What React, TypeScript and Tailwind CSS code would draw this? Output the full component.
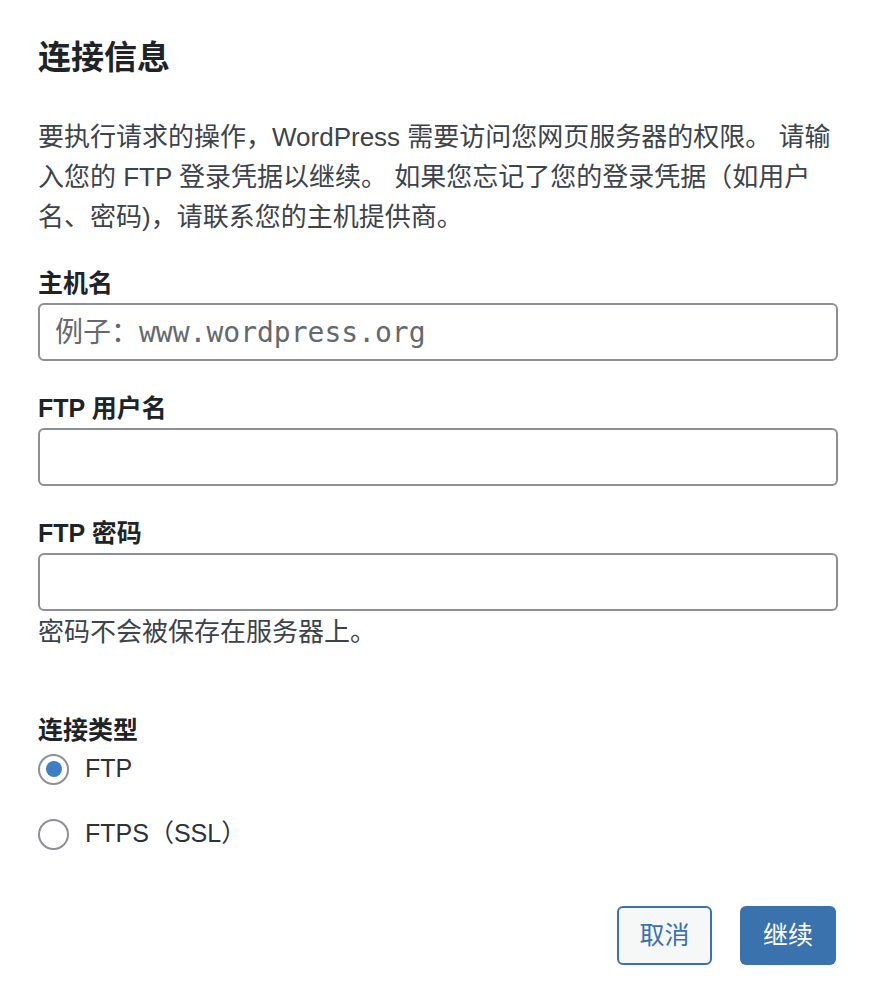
import { useState } from "react";

const sans = "font-['Liberation_Sans','Noto_Sans_CJK_SC',sans-serif]";

function Field({ label, placeholder, type = "text" }: { label: string; placeholder?: string; type?: string }) {
  return (
    <label className="block">
      <span className="block h-[33px] text-[25px] font-bold leading-[33px] text-[#1d2327]">{label}</span>
      <input
        type={type}
        placeholder={placeholder}
        className="mt-[3px] block h-[58px] w-full rounded-[6px] border-2 border-[#8c8f94] bg-white px-[15px] font-['DejaVu_Sans_Mono','Noto_Sans_CJK_SC',monospace] text-[28px] text-[#1d2327] outline-none placeholder:text-[#646970]"
      />
    </label>
  );
}

function Radio({ label, checked, onSelect }: { label: string; checked: boolean; onSelect: () => void }) {
  return (
    <button type="button" onClick={onSelect} className="flex h-[40px] items-center gap-[16px] text-left">
      <span className="grid size-[31px] shrink-0 place-items-center rounded-full border-2 border-[#8c8f94] bg-white">
        {checked ? <span className="size-[16px] rounded-full bg-[#3d7ec4]" /> : null}
      </span>
      <span className="text-[25px] text-[#2c3338]">{label}</span>
    </button>
  );
}

export default function App() {
  const [kind, setKind] = useState<"ftp" | "ftps">("ftp");

  return (
    <div className={`${sans} min-h-screen bg-white pl-[38px] pr-[40px] pt-[38px]`}>
      <h1 className="h-[40px] text-[33px] font-bold leading-[40px] text-[#1d2327]">连接信息</h1>

      <p className="mt-[39px] whitespace-nowrap text-[26px] leading-[40px] text-[#3c434a]">
        要执行请求的操作，WordPress 需要访问您网页服务器的权限。 请输
        <br />
        入您的 FTP 登录凭据以继续。 如果您忘记了您的登录凭据（如用户
        <br />
        名、密码)，请联系您的主机提供商。
      </p>

      <div className="mt-[30px] flex flex-col gap-[31px]">
        <Field label="主机名" placeholder="例子：www.wordpress.org" />
        <Field label="FTP 用户名" />
        <div>
          <Field label="FTP 密码" type="password" />
          <p className="mt-px text-[26px] leading-[40px] text-[#3c434a]">密码不会被保存在服务器上。</p>
        </div>
      </div>

      <div className="mt-[62px]">
        <div className="h-[33px] text-[25px] font-bold leading-[33px] text-[#1d2327]">连接类型</div>
        <div className="mt-[2px] flex flex-col items-start gap-[25px]">
          <Radio label="FTP" checked={kind === "ftp"} onSelect={() => setKind("ftp")} />
          <Radio label="FTPS（SSL）" checked={kind === "ftps"} onSelect={() => setKind("ftps")} />
        </div>
      </div>

      <div className="mt-[52px] flex justify-end gap-[28px] pr-[2px]">
        <button type="button" className="h-[59px] w-[95px] rounded-[6px] border-2 border-[#3a72ad] bg-[#f6f7f7] text-[25px] text-[#3a72ad]">
          取消
        </button>
        <button type="button" className="h-[59px] w-[96px] rounded-[6px] bg-[#3a72ad] text-[25px] text-white">
          继续
        </button>
      </div>
    </div>
  );
}
